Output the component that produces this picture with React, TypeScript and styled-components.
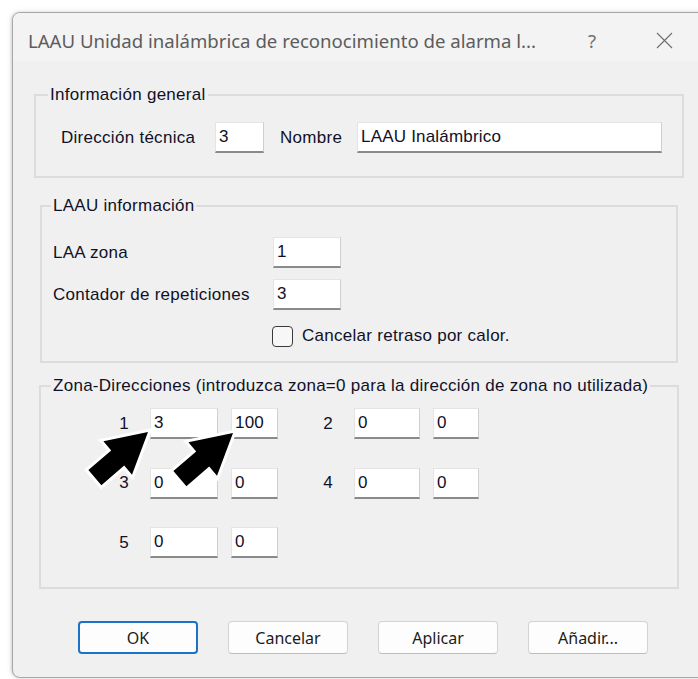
import React from "react";
import styled, { createGlobalStyle } from "styled-components";

const GlobalStyle = createGlobalStyle`
  html, body {
    margin: 0;
    padding: 0;
    background: #ffffff;
    overflow: hidden;
  }
  body {
    width: 698px;
    height: 679px;
  }
`;

const Page = styled.div`
  padding: 12px 0 0 12px;
`;

const Window = styled.div`
  width: 700px;
  height: 666px;
  box-sizing: border-box;
  border: 1px solid #a7a7a7;
  border-radius: 8px;
  background: #f0f0f0;
  box-shadow: -1px 0 3px rgba(0, 0, 0, 0.16), 0 0 8px rgba(0, 0, 0, 0.06);
  overflow: hidden;
  display: flex;
  flex-direction: column;
`;

const TitleBar = styled.div`
  height: 49px;
  flex: none;
  display: flex;
  align-items: center;
  padding: 5px 0 0 15px;
  box-sizing: border-box;
  background: #f3f3f3;
  font-family: "Noto Sans", "Open Sans", sans-serif;
  font-size: 18.6px;
  color: #5c5c5c;
`;

const Caption = styled.span`
  flex: 1;
  white-space: nowrap;
  overflow: hidden;
`;

const CaptionButton = styled.span<{ $w: number }>`
  flex: none;
  width: ${(p) => p.$w}px;
  height: 100%;
  display: flex;
  align-items: center;
  justify-content: center;
  color: #707070;
`;

const Body = styled.div`
  flex: 1;
  display: flex;
  flex-direction: column;
  padding: 23px 27px 0 21px;
  font-family: "Liberation Sans", Arial, sans-serif;
  font-size: 17px;
  letter-spacing: 0.28px;
  color: #101028;
`;

const Group = styled.fieldset<{ $inset: number; $gap: number }>`
  margin: ${(p) => p.$gap}px ${(p) => p.$inset}px 0 ${(p) => p.$inset}px;
  padding: 0;
  min-width: 0;
  border: 2px solid #dcdcdc;
`;

const Legend = styled.legend<{ $offset: number }>`
  margin-left: ${(p) => p.$offset}px;
  padding: 0 2px;
  line-height: 20px;
  font-size: 17px;
`;

const GeneralRow = styled.div`
  display: grid;
  grid-template-columns: 154px 49px 93px 1fr;
  align-items: center;
  padding: 17px 20px 23px 25px;
`;

const Label = styled.span<{ $indent?: number }>`
  padding-left: ${(p) => p.$indent ?? 0}px;
  white-space: nowrap;
  line-height: 20px;
`;

const Field = styled.input<{ $w?: number }>`
  box-sizing: border-box;
  width: ${(p) => (p.$w ? `${p.$w}px` : "100%")};
  height: 31px;
  margin: 0;
  padding: 0 0 0 3px;
  border: 1px solid #e4e4e4;
  border-right-color: #cfcfcf;
  border-bottom: 2px solid #8a8a8a;
  background: #ffffff;
  font-family: "Liberation Sans", Arial, sans-serif;
  font-size: 17px;
  letter-spacing: 0.2px;
  color: #101028;
  outline: none;
`;

const InfoGrid = styled.div`
  display: grid;
  grid-template-columns: 220px 68px 1fr;
  grid-template-rows: 31px 31px 25px;
  row-gap: 11px;
  align-items: center;
  padding: 21px 0 15px 11px;
`;

const CheckRow = styled.label`
  grid-column: 2 / 4;
  align-self: end;
  display: flex;
  align-items: center;
  gap: 9px;
  margin-left: -1px;
  height: 20px;
  white-space: nowrap;
`;

const CheckBox = styled.span`
  flex: none;
  width: 21px;
  height: 21px;
  box-sizing: border-box;
  border: 1.5px solid #3a3a3a;
  border-radius: 4px;
  background: #f7f7f7;
`;

const ZoneGrid = styled.div`
  position: relative;
  display: grid;
  grid-template-columns: 84px 68px 47px 50px 66px 46px;
  grid-auto-rows: 31px;
  column-gap: 13px;
  row-gap: 28.5px;
  align-items: center;
  margin: 12px 0 29px 12px;
`;

const ZoneNumber = styled.span`
  text-align: right;
  padding-right: 8px;
  line-height: 20px;
`;

const ArrowLayer = styled.svg`
  position: absolute;
  left: 0;
  top: 0;
  width: 100%;
  height: 100%;
  overflow: visible;
  pointer-events: none;
`;

const ButtonRow = styled.div`
  display: flex;
  gap: 30px;
  margin: 32px 0 0 44px;
`;

const DialogButton = styled.button<{ $default?: boolean }>`
  width: 120px;
  height: 33px;
  box-sizing: border-box;
  border-radius: 4px;
  background: #fdfdfd;
  border: ${(p) => (p.$default ? "2px solid #1a73c9" : "1px solid #d3d3d3")};
  border-bottom-color: ${(p) => (p.$default ? "#1a73c9" : "#bdbdbd")};
  font-family: "Noto Sans", "Open Sans", sans-serif;
  font-size: 16px;
  color: #1b1b1b;
  padding: 0;
`;

const arrowPoints =
  "95,24 79,66.7 71.2,57.6 48.4,77.2 35.4,62 58.2,42.4 50.4,33.3";

const Arrow = ({ dx, dy }: { dx: number; dy: number }) => (
  <polygon
    points={arrowPoints}
    transform={`translate(${dx} ${dy})`}
    fill="#000000"
    stroke="#ffffff"
    strokeWidth={6}
    strokeLinejoin="miter"
    paintOrder="stroke"
  />
);

const zones = [
  { n: 1, a: "3", b: "100" },
  { n: 2, a: "0", b: "0" },
  { n: 3, a: "0", b: "0" },
  { n: 4, a: "0", b: "0" },
  { n: 5, a: "0", b: "0" },
];

export default function App() {
  return (
    <>
      <GlobalStyle />
      <Page>
        <Window>
          <TitleBar>
            <Caption>LAAU Unidad inalámbrica de reconocimiento de alarma l...</Caption>
            <CaptionButton $w={64}>?</CaptionButton>
            <CaptionButton $w={80}>
              <svg width="17" height="17" viewBox="0 0 17 17">
                <path d="M1 1 L16 16 M16 1 L1 16" stroke="#6e6e6e" strokeWidth="1.1" fill="none" />
              </svg>
            </CaptionButton>
            <CaptionButton $w={7} />
          </TitleBar>

          <Body>
            <Group $inset={0} $gap={0}>
              <Legend $offset={12}>Información general</Legend>
              <GeneralRow>
                <Label>Dirección técnica</Label>
                <Field readOnly value="3" $w={49} />
                <Label $indent={16}>Nombre</Label>
                <Field readOnly value="LAAU Inalámbrico" />
              </GeneralRow>
            </Group>

            <Group $inset={6} $gap={18}>
              <Legend $offset={9}>LAAU información</Legend>
              <InfoGrid>
                <Label>LAA zona</Label>
                <Field readOnly value="1" $w={68} />
                <span />
                <Label>Contador de repeticiones</Label>
                <Field readOnly value="3" $w={68} />
                <span />
                <span />
                <CheckRow>
                  <CheckBox />
                  Cancelar retraso por calor.
                </CheckRow>
              </InfoGrid>
            </Group>

            <Group $inset={5} $gap={13}>
              <Legend $offset={10}>
                Zona-Direcciones (introduzca zona=0 para la dirección de zona no utilizada)
              </Legend>
              <ZoneGrid>
                {zones.map((z) => (
                  <React.Fragment key={z.n}>
                    <ZoneNumber>{z.n}</ZoneNumber>
                    <Field readOnly value={z.a} $w={z.n % 2 ? 68 : 66} />
                    <Field readOnly value={z.b} $w={z.n % 2 ? 47 : 46} />
                  </React.Fragment>
                ))}
                <ArrowLayer>
                  <Arrow dx={0} dy={0} />
                  <Arrow dx={85} dy={1} />
                </ArrowLayer>
              </ZoneGrid>
            </Group>

            <ButtonRow>
              <DialogButton $default>OK</DialogButton>
              <DialogButton>Cancelar</DialogButton>
              <DialogButton>Aplicar</DialogButton>
              <DialogButton>Añadir...</DialogButton>
            </ButtonRow>
          </Body>
        </Window>
      </Page>
    </>
  );
}
